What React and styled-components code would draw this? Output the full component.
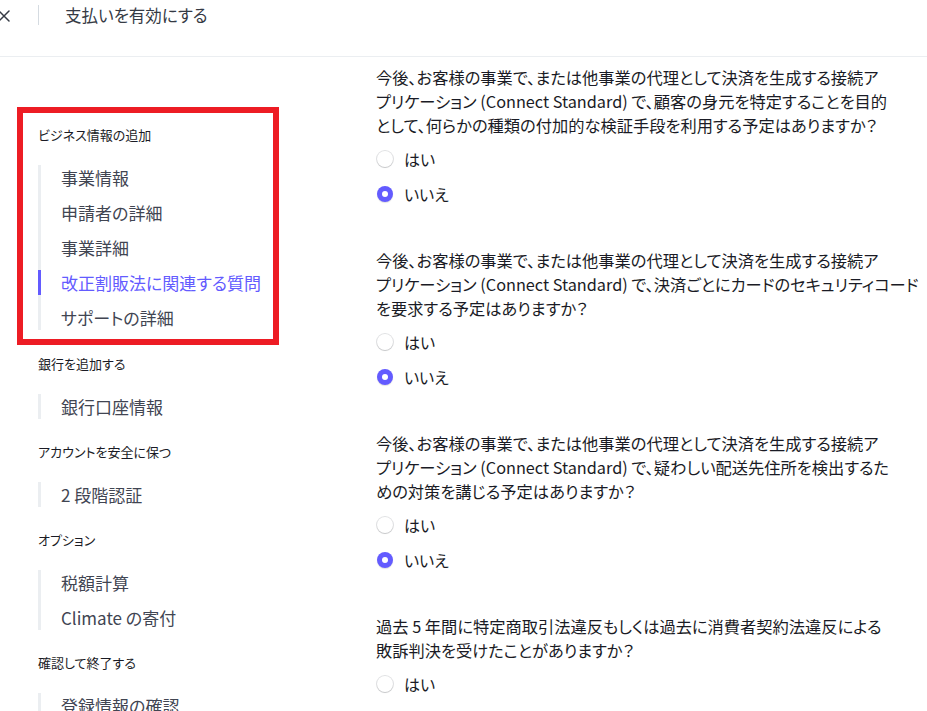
import { createGlobalStyle } from "styled-components";
import styled from "styled-components";

const GlobalStyle = createGlobalStyle`
  body {
    margin: 0;
    background: #ffffff;
    font-family: "Noto Sans CJK JP", "Noto Sans", sans-serif;
    font-feature-settings: "palt";
    color: #1a1b25;
    overflow: hidden;
  }
`;

const Page = styled.div`
  width: 927px;
  height: 711px;
  overflow: hidden;
`;

const Header = styled.header`
  border-bottom: 1px solid #ebeef1;
  box-sizing: border-box;
  display: flex;
  align-items: flex-start;
  height: 57px;
  padding-top: 5px;
`;

const CloseButton = styled.button.attrs({ type: "button" })`
  align-items: center;
  background: transparent;
  border: 0;
  cursor: pointer;
  display: flex;
  height: 21px;
  margin-left: -2px;
  padding: 0;
  width: 14px;
`;

const Divider = styled.div`
  background-color: #d5dbe1;
  height: 20px;
  margin-left: 26px;
  width: 1px;
`;

const Title = styled.h1`
  color: #353a44;
  font-size: 16.5px;
  font-weight: 400;
  line-height: 21px;
  margin: 0 0 0 26px;
`;

const Body = styled.div`
  display: flex;
`;

const Sidebar = styled.nav`
  box-sizing: border-box;
  display: flex;
  flex-direction: column;
  flex-shrink: 0;
  gap: 24px;
  padding: 56px 0 0 38px;
  width: 376px;
`;

const Group = styled.section`
  display: flex;
  flex-direction: column;
  gap: 21px;
  ${({ $highlight }) =>
    $highlight &&
    `
    outline: 6px solid #ed1c24;
    margin: 0 0 -8px -15px;
    padding: 13px 0 9px 15px;
    width: 235px;
  `}
`;

const GroupLabel = styled.div`
  color: #1a1b25;
  font-size: 13px;
  line-height: 18px;
`;

const StepList = styled.ul`
  border-left: 3px solid #ebeef1;
  display: flex;
  flex-direction: column;
  gap: 10px;
  list-style: none;
  margin: 0;
  padding: 0;
`;

const Step = styled.li`
  color: ${({ $active }) => ($active ? "#635bff" : "#414552")};
  font-size: 17px;
  line-height: 25px;
  margin-left: -3px;
  padding-left: 23px;
  position: relative;
  white-space: nowrap;

  &:before {
    background-color: ${({ $active }) => ($active ? "#635bff" : "transparent")};
    bottom: 0;
    content: "";
    left: 0;
    position: absolute;
    top: 0;
    width: 3px;
  }
`;

const Main = styled.main`
  display: flex;
  flex-direction: column;
  gap: 42px;
  padding-top: 8px;
`;

const Question = styled.div`
  display: flex;
  flex-direction: column;
  gap: 11px;
`;

const Prompt = styled.p`
  color: #1a1b25;
  font-size: 16.25px;
  line-height: 24px;
  margin: 0 0 -1px;
  white-space: nowrap;
`;

const Option = styled.label`
  align-items: center;
  color: #1a1b25;
  display: flex;
  font-size: 16px;
  gap: 11px;
  line-height: 24px;
`;

const Radio = styled.span`
  background-color: ${({ $checked }) => ($checked ? "#635bff" : "#ffffff")};
  border-radius: 50%;
  box-shadow: ${({ $checked }) =>
    $checked
      ? "0 1px 1px rgba(0, 0, 0, 0.12)"
      : "0 0 0 1px rgba(64, 68, 82, 0.16), 0 1px 1px rgba(0, 0, 0, 0.12)"};
  display: inline-block;
  height: 16px;
  margin-left: 1px;
  position: relative;
  width: 16px;

  &:after {
    background: #ffffff;
    border-radius: 50%;
    content: "";
    display: ${({ $checked }) => ($checked ? "block" : "none")};
    height: 6px;
    left: 5px;
    position: absolute;
    top: 5px;
    width: 6px;
  }
`;

const CloseIcon = () => (
  <svg width="12" height="12" viewBox="0 0 12 12" fill="none">
    <path d="M1 1l10 10M11 1L1 11" stroke="#353a44" strokeWidth="1.5" strokeLinecap="round" />
  </svg>
);

const steps = [
  {
    label: "ビジネス情報の追加",
    highlight: true,
    items: ["事業情報", "申請者の詳細", "事業詳細", "改正割販法に関連する質問", "サポートの詳細"],
    active: 3,
  },
  { label: "銀行を追加する", items: ["銀行口座情報"] },
  { label: "アカウントを安全に保つ", items: ["2 段階認証"] },
  { label: "オプション", items: ["税額計算", "Climate の寄付"] },
  { label: "確認して終了する", items: ["登録情報の確認"] },
];

const questions = [
  {
    lines: [
      "今後、お客様の事業で、または他事業の代理として決済を生成する接続ア",
      "プリケーション (Connect Standard) で、顧客の身元を特定することを目的",
      "として、何らかの種類の付加的な検証手段を利用する予定はありますか？",
    ],
  },
  {
    lines: [
      "今後、お客様の事業で、または他事業の代理として決済を生成する接続ア",
      "プリケーション (Connect Standard) で、決済ごとにカードのセキュリティコード",
      "を要求する予定はありますか？",
    ],
  },
  {
    lines: [
      "今後、お客様の事業で、または他事業の代理として決済を生成する接続ア",
      "プリケーション (Connect Standard) で、疑わしい配送先住所を検出するた",
      "めの対策を講じる予定はありますか？",
    ],
  },
  {
    lines: [
      "過去 5 年間に特定商取引法違反もしくは過去に消費者契約法違反による",
      "敗訴判決を受けたことがありますか？",
    ],
    onlyYes: true,
  },
];

const App = () => (
  <Page>
    <GlobalStyle />
    <Header>
      <CloseButton>
        <CloseIcon />
      </CloseButton>
      <Divider />
      <Title>支払いを有効にする</Title>
    </Header>

    <Body>
      <Sidebar>
        {steps.map((group) => (
          <Group key={group.label} $highlight={group.highlight}>
            <GroupLabel>{group.label}</GroupLabel>
            <StepList>
              {group.items.map((item, i) => (
                <Step key={item} $active={group.active === i}>
                  {item}
                </Step>
              ))}
            </StepList>
          </Group>
        ))}
      </Sidebar>

      <Main>
        {questions.map((q, qi) => (
          <Question key={qi}>
            <Prompt>
              {q.lines.map((line, li) => (
                <span key={li}>
                  {line}
                  {li < q.lines.length - 1 && <br />}
                </span>
              ))}
            </Prompt>
            <Option>
              <Radio />
              はい
            </Option>
            {!q.onlyYes && (
              <Option>
                <Radio $checked />
                いいえ
              </Option>
            )}
          </Question>
        ))}
      </Main>
    </Body>
  </Page>
);

export default App;
